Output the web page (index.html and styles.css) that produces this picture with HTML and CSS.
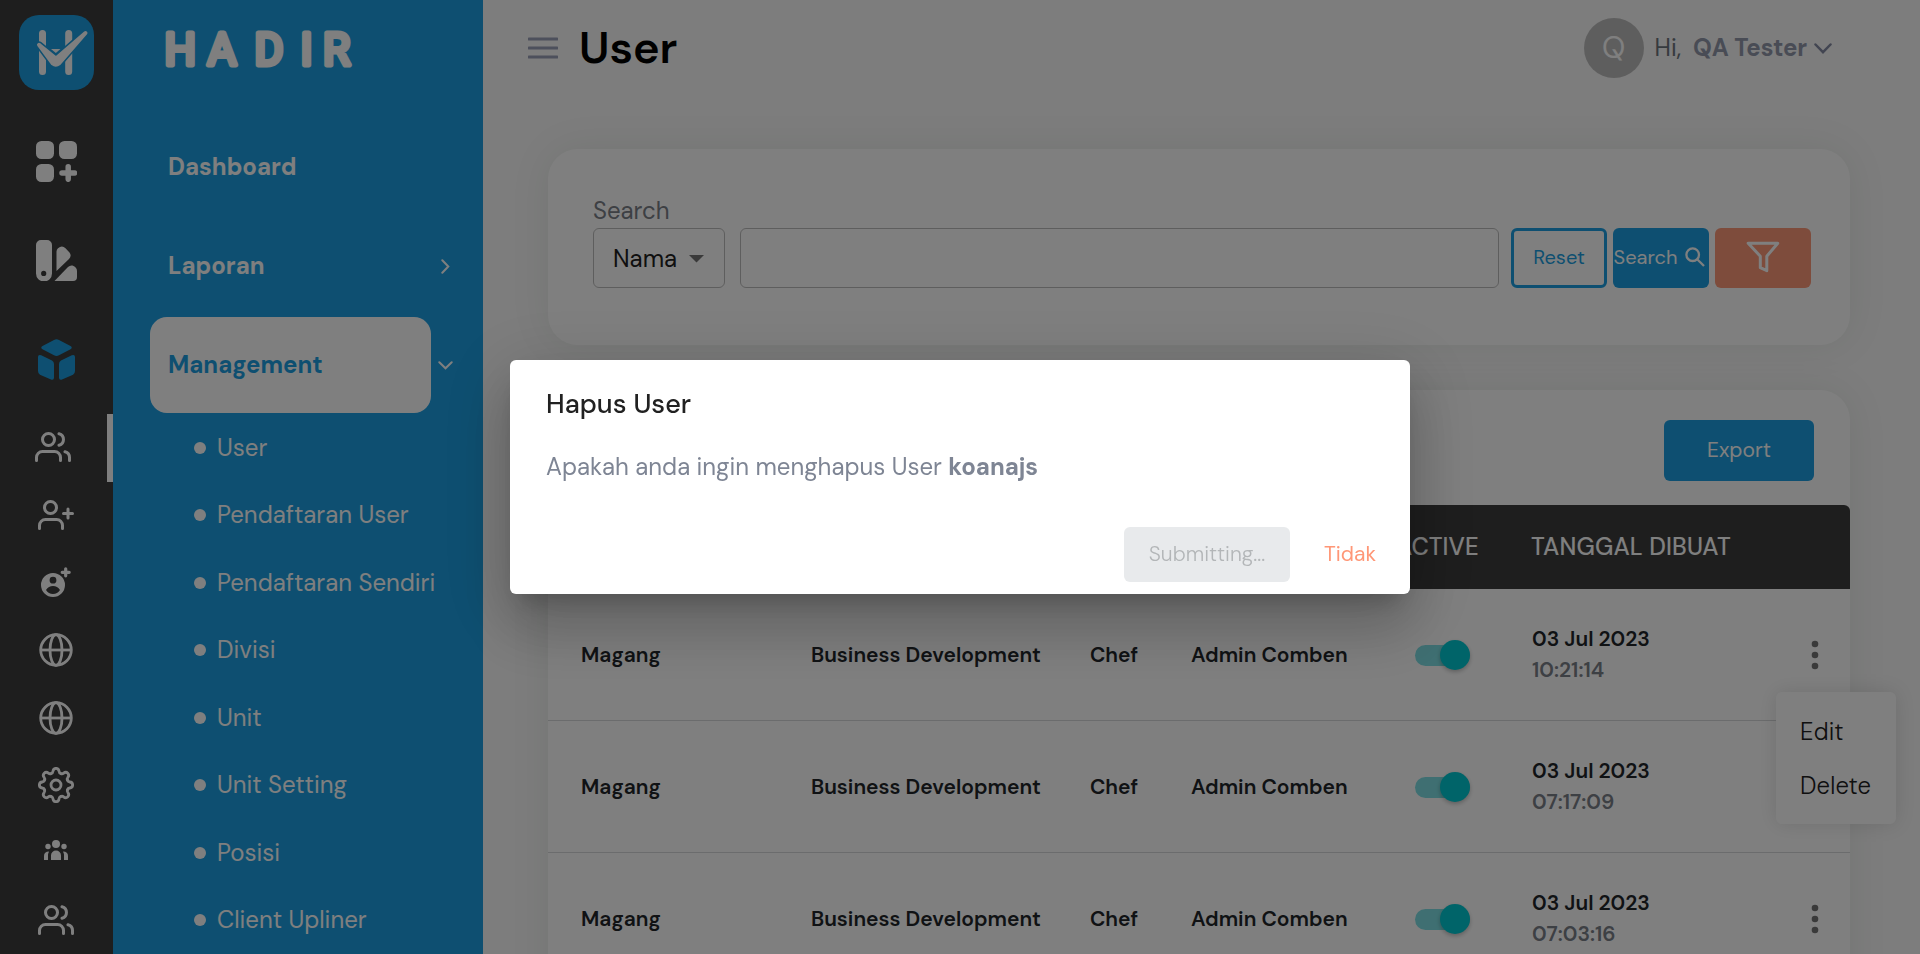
FILE: index.html
```html
<!DOCTYPE html>
<html lang="id">
<head>
<meta charset="utf-8">
<title>User</title>
<link rel="stylesheet" href="styles.css">
</head>
<body>
<svg class="defs" width="0" height="0">
  <symbol id="users" viewBox="0 0 36 30"><g fill="none" stroke="currentColor" stroke-width="3" stroke-linecap="round"><circle cx="13.5" cy="7.5" r="6"/><path d="M1.5 28.5v-3a6 6 0 0 1 6-6h12a6 6 0 0 1 6 6v3M24 1.7a6 6 0 0 1 0 11.6M30 19.7a6 6 0 0 1 4.5 5.8v3"/></g></symbol>
  <symbol id="globe" viewBox="0 0 34 34"><g fill="none" stroke="currentColor" stroke-width="2.8"><circle cx="17" cy="17" r="15.3"/><ellipse cx="17" cy="17" rx="6" ry="15.3"/><path d="M2 17h30"/></g></symbol>
  <symbol id="dots" viewBox="0 0 8 30"><g fill="currentColor"><circle cx="4" cy="4" r="3.3"/><circle cx="4" cy="15" r="3.3"/><circle cx="4" cy="26" r="3.3"/></g></symbol>
  <path id="lobe" d="M-4.8-11.5C-3.4-11.9-3.1-12.8-3-13.8C-2.6-17.6 2.6-17.6 3-13.8C3.1-12.8 3.4-11.9 4.8-11.5"/>
</svg>

<div class="app">
  <nav class="rail">
    <svg class="logo" viewBox="0 0 75 75">
      <rect width="75" height="75" rx="20" fill="#1c9fe2"/>
      <g stroke="#fff" stroke-width="7" stroke-linecap="round"><path d="M23.5 18.5v38M49.7 18.5v38"/></g>
      <path d="M32 34h9.500l-4.700 4z" fill="#fff"/>
      <path d="M20 29.800L37 43.500L66.500 18L40 48.500Q36.800 51 33.800 48.500Z" fill="#1c9fe2" stroke="#1c9fe2" stroke-width="7" stroke-linejoin="round"/>
      <path d="M20 29.800L37 43.500L66.500 18L40 48.500Q36.800 51 33.800 48.500Z" fill="#fff" stroke="#fff" stroke-width="4" stroke-linejoin="round"/>
    </svg>
    <div class="rail-main">
      <svg width="41" height="41" viewBox="0 0 41 41" fill="#fff"><rect width="18" height="18" rx="5.500"/><rect x="23" width="18" height="18" rx="5.500"/><rect y="23" width="18" height="18" rx="5.500"/><path d="M32.200 25.800v12.500M26 32h12.500" stroke="#fff" stroke-width="5.500" stroke-linecap="round"/></svg>
    </div>
    <div class="rail-main">
      <svg width="41" height="41" viewBox="0 0 41 41" fill="#fff"><path fill-rule="evenodd" d="M5 0h6a5 5 0 0 1 5 5v28.500a8 8 0 0 1-16 0V5a5 5 0 0 1 5-5zM7.700 30.800a2.600 2.600 0 1 0 0 5.200a2.600 2.600 0 0 0 0-5.200z"/><path d="M20.500 31V11.500q0-2 1.500-3.300q4-3.500 7.500 0l4 4.300q2.500 3.300-.5 6.500z"/><path d="M18.500 41L32 27q2-2 4.500-1.500q4.500 1.500 4.500 5.500v6q0 4-4 4z"/></svg>
    </div>
    <div class="rail-main">
      <svg width="37" height="41" viewBox="0 0 37 41" fill="#1c9fe2"><path d="M4.500 7L16 1q2.500-1.500 5 0l11.500 6q2.500 1.700 0 3.300L21 16.300q-2.500 1.200-5 0L4.500 10.300Q2 8.700 4.500 7z"/><path d="M3.200 16.300L14 21.500q2 1.200 2 3.500v13.500q0 3-3 2L2 35.700Q0 34.500 0 32V18q0-2.700 3.200-1.700z"/><path d="M33.800 16.300L23 21.500q-2 1.200-2 3.500v13.500q0 3 3 2l11-4.800q2-1.200 2-3.700V18q0-2.700-3.200-1.700z"/></svg>
    </div>
    <div class="rail-sub active"><svg width="36" height="30"><use href="#users"/></svg></div>
    <div class="rail-sub"><svg width="36" height="30" viewBox="0 0 36 30" fill="none" stroke="#fff" stroke-width="3" stroke-linecap="round"><circle cx="12.500" cy="7.500" r="6"/><path d="M1.500 28.500v-3a6 6 0 0 1 6-6h11a6 6 0 0 1 6 6v3M25.500 13.500h9M30 9v9"/></svg></div>
    <div class="rail-sub"><svg width="30" height="31" viewBox="0 0 30 31" fill="#fff"><path fill-rule="evenodd" d="M12 6a12 12 0 1 0 0 24a12 12 0 0 0 0-24zM12 9.800a3.400 3.400 0 1 1 0 6.800a3.400 3.400 0 0 1 0-6.800zM5 23q2.500-4 7-4t7 4q-2.500 4-7 4t-7-4z"/><path d="M24.700 1.800v7M21.200 5.300h7" stroke="#fff" stroke-width="3.200" stroke-linecap="round"/></svg></div>
    <div class="rail-sub"><svg width="34" height="34"><use href="#globe"/></svg></div>
    <div class="rail-sub"><svg width="34" height="34"><use href="#globe"/></svg></div>
    <div class="rail-sub"><svg width="36" height="36" viewBox="-18 -18 36 36" fill="none" stroke="#fff" stroke-width="2.800" stroke-linecap="round"><circle r="5"/><use href="#lobe"/><use href="#lobe" transform="rotate(45)"/><use href="#lobe" transform="rotate(90)"/><use href="#lobe" transform="rotate(135)"/><use href="#lobe" transform="rotate(180)"/><use href="#lobe" transform="rotate(225)"/><use href="#lobe" transform="rotate(270)"/><use href="#lobe" transform="rotate(315)"/></svg></div>
    <div class="rail-sub"><svg class="group" width="24" height="20" viewBox="0 0 24 20" fill="#fff"><circle cx="12" cy="4" r="4"/><circle cx="4" cy="6.500" r="2.700"/><circle cx="20" cy="6.500" r="2.700"/><path d="M7 20v-4.500a5 5 0 0 1 10 0V20zM0 20v-4q0-4.500 5-4.500q-1 2-1 4V20zM24 20v-4q0-4.500-5-4.500q1 2 1 4V20z"/></svg></div>
    <div class="rail-sub"><svg width="36" height="30"><use href="#users"/></svg></div>
  </nav>

  <aside class="sidebar">
    <svg class="brand" width="190" height="44"><text x="0.500 43.500 90.500 136.500 159" y="37">HADIR</text></svg>
    <div class="item"><span>Dashboard</span></div>
    <div class="item"><span>Laporan</span><svg width="9" height="15" viewBox="0 0 9 15"><path d="M1.300 1.300l6 6.200l-6 6.200"/></svg></div>
    <div class="item selected"><span>Management</span><svg width="15" height="9" viewBox="0 0 15 9"><path d="M1.300 1.300l6.200 6l6.200-6"/></svg></div>
    <ul class="subs">
      <li>User</li><li>Pendaftaran User</li><li>Pendaftaran Sendiri</li><li>Divisi</li><li>Unit</li><li>Unit Setting</li><li>Posisi</li><li>Client Upliner</li>
    </ul>
  </aside>

  <main class="main">
    <header class="top">
      <svg class="burger" width="30" height="22" viewBox="0 0 30 22"><path d="M1 2h28M1 11h28M1 20h28"/></svg>
      <h1>User</h1>
      <div class="avatar">Q</div>
      <span class="hi">Hi,</span>
      <span class="name">QA Tester</span>
      <svg class="chev" width="18" height="11" viewBox="0 0 18 11"><path d="M1.500 1.500L9 9.200l7.500-7.700"/></svg>
    </header>

    <section class="card search-card">
      <label>Search</label>
      <div class="fields">
        <div class="select"><span>Nama</span><svg width="15" height="8"><path d="M0 0h15l-7.500 7.500z" fill="#757575"/></svg></div>
        <div class="input"></div>
        <button class="btn outline">Reset</button>
        <button class="btn find">Search<svg width="20" height="20" viewBox="0 0 20 20"><circle cx="7.700" cy="7.700" r="6.300"/><path d="M12.200 12.200l6.800 6.800"/></svg></button>
        <button class="btn filter"><svg width="34" height="32" viewBox="0 0 34 32"><path d="M2.200 2.200h29.600l-11 13v14.500l-6.500-3V15.200z"/></svg></button>
      </div>
    </section>

    <section class="card table-card">
      <div class="tools"><button class="btn export">Export</button></div>
      <div class="thead"><span class="c-act">ACTIVE</span><span>TANGGAL DIBUAT</span></div>
      <div class="row"><span>Magang</span><span>Business Development</span><span>Chef</span><span>Admin Comben</span><i class="toggle"></i><div class="date"><b>03 Jul 2023</b><small>10:21:14</small></div><svg width="8" height="30"><use href="#dots"/></svg></div>
      <div class="row"><span>Magang</span><span>Business Development</span><span>Chef</span><span>Admin Comben</span><i class="toggle"></i><div class="date"><b>03 Jul 2023</b><small>07:17:09</small></div><svg width="8" height="30"><use href="#dots"/></svg></div>
      <div class="row"><span>Magang</span><span>Business Development</span><span>Chef</span><span>Admin Comben</span><i class="toggle"></i><div class="date"><b>03 Jul 2023</b><small>07:03:16</small></div><svg width="8" height="30"><use href="#dots"/></svg></div>
    </section>
  </main>
</div>

<div class="menu"><span>Edit</span><span>Delete</span></div>

<div class="backdrop">
  <div class="dialog">
    <h2>Hapus User</h2>
    <p>Apakah anda ingin menghapus User <b>koanajs</b></p>
    <div class="actions"><button class="submit">Submitting...</button><button class="cancel">Tidak</button></div>
  </div>
</div>
</body>
</html>
```
FILE: styles.css
```css
* { box-sizing: border-box; }
body { margin: 0; height: 954px; overflow: hidden; background: #fafafa; font: 400 24px/36px "DM Sans", "Open Sans", sans-serif; font-optical-sizing: none; color: #212121; }
button { font: inherit; font-optical-sizing: none; border: 0; padding: 0; background: none; }
.defs { position: absolute; }
.app { display: flex; height: 954px; overflow: hidden; }

.rail { width: 113px; flex: none; background: #3c3c3c; color: #fff; display: flex; flex-direction: column; align-items: center; padding-top: 15px; }
.logo { width: 75px; height: 75px; flex: none; margin-bottom: 22px; }
.rail-main { height: 99px; flex: none; display: flex; align-items: center; }
.rail-main:nth-of-type(3) { margin-bottom: 5px; }
.rail-sub { width: 100%; height: 67.500px; flex: none; display: flex; align-items: center; justify-content: center; padding-right: 1px; }
.rail-sub.active { border-right: 6px solid #fff; padding: 0 1px 1px 0; }
.group { margin-top: -5px; }

.sidebar { width: 370px; flex: none; background: #1c9fe2; color: #fff; padding: 28px 28px 0 37px; }
.brand { display: block; margin: 0 0 47px 14px; overflow: visible; }
.brand text { font: 400 44px Roboto, sans-serif; fill: #fff; stroke: #fff; stroke-width: 5px; stroke-linejoin: round; }
.item { height: 96px; margin-bottom: 3px; display: flex; align-items: center; font-weight: 700; }
.item span { width: 281px; height: 96px; line-height: 96px; padding-left: 18px; border-radius: 17px; }
.item svg { fill: none; stroke: #fff; stroke-width: 2; stroke-linecap: round; margin-left: 10px; }
.item.selected { margin-bottom: 1px; }
.item.selected span { background: #fff; color: #1c9fe2; }
.item.selected svg { margin-left: 7px; }
.subs { list-style: none; margin: 0; padding: 0 0 0 44px; }
.subs li { height: 67.500px; display: flex; align-items: center; gap: 11px; white-space: nowrap; }
.subs li::before { content: ""; width: 12px; height: 12px; border-radius: 50%; background: #fff; }

.main { flex: 1; min-width: 0; padding: 0 70px 0 65px; }
.top { height: 96px; margin: 0 18px 53px -20px; display: flex; align-items: center; }
.burger { stroke: #9aa0b8; stroke-width: 3; stroke-linecap: round; margin-left: 0; }
h1 { margin: 0 auto 0 21px; font-size: 45px; line-height: 60px; font-weight: 600; color: #000; }
.avatar { width: 60px; height: 60px; border-radius: 50%; background: #bdbdbd; color: #fff; font-size: 30px; display: grid; place-items: center; }
.hi { color: #6c757d; margin: 0 12px 0 11px; }
.name { color: #9298ab; font-weight: 700; letter-spacing: -.1px; }
.chev { fill: none; stroke: #848ba3; stroke-width: 2.500; stroke-linecap: round; margin-left: 7px; }

.card { background: #fff; border-radius: 30px; box-shadow: 0 0 42px rgba(10, 50, 30, .08); }
.search-card { height: 196px; padding: 44px 39px 0 45px; margin-bottom: 45px; }
.search-card label { display: block; height: 35px; color: #7a8088; }
.fields { display: flex; height: 60px; }
.select, .input { border: 1px solid #bdbdbd; border-radius: 6px; }
.select { width: 132px; display: flex; align-items: center; justify-content: space-between; padding: 1px 20px 0 19px; margin-right: 15px; }
.input { flex: 1; margin-right: 12px; }
.btn { width: 96px; height: 60px; border-radius: 6px; background: #1c9fe2; color: #fff; font-size: 20px; display: flex; align-items: center; justify-content: center; padding-bottom: 2px; }
.btn.outline { background: none; border: 3px solid #1c9fe2; color: #1c9fe2; }
.btn.find { margin: 0 6px; gap: 8px; padding-right: 3px; }
.find svg, .filter svg { fill: none; stroke: #fff; stroke-width: 2.300; }
.filter svg { stroke-width: 3; stroke-linejoin: round; }
.btn.filter { background: #fc9878; }

.tools { height: 115px; padding: 30px 36px 0 0; display: flex; justify-content: flex-end; }
.btn.export { width: 150px; height: 61px; font-size: 21px; }
.table-card { height: 700px; }
.thead { height: 84px; background: #3c3c3c; color: #fff; border-radius: 6px 6px 0 0; font-weight: 500; display: grid; grid-template-columns: 848px 135px 1fr; align-items: center; letter-spacing: .15px; }
.thead .c-act { grid-column: 2; }
.row { height: 132px; border-bottom: 1px solid #d6d8da; padding: 0 31px 0 33px; display: grid; grid-template-columns: 230px 279px 101px 224px 117px 1fr 8px; align-items: center; font-size: 21px; font-weight: 600; color: #212529; white-space: nowrap; }
.row > svg { color: #757575; }
.toggle { width: 55px; height: 21px; border-radius: 11px; background: #7edfe4; position: relative; top: 1px; }
.toggle::after { content: ""; position: absolute; right: 0; top: -5px; width: 30px; height: 30px; border-radius: 50%; background: #00c8d2; box-shadow: 0 2px 4px rgba(0, 0, 0, .25); }
.date { line-height: 31px; display: grid; }
.date b { font-weight: 600; }
.date small { font-size: 21px; color: #7a8088; }

.menu { position: absolute; left: 1776px; top: 692px; width: 120px; height: 132px; border-radius: 6px; background: #fff; box-shadow: 0 0 20px rgba(0, 0, 0, .12); padding: 13px 24px 11px; display: grid; grid-template-rows: 54px 54px; align-items: center; font-weight: 300; letter-spacing: .15px; }

.backdrop { position: fixed; inset: 0; background: rgba(0, 0, 0, .5); display: flex; align-items: center; justify-content: center; }
.dialog { width: 900px; height: 234px; border-radius: 6px; background: #fff; padding: 25px 12px 12px 36px; box-shadow: 0 16px 22px -10px rgba(0, 0, 0, .2), 0 36px 57px 5px rgba(0, 0, 0, .14), 0 14px 69px 12px rgba(0, 0, 0, .12); }
h2 { margin: 0 0 26px; font-size: 27px; line-height: 38px; font-weight: 500; }
p { margin: 0 0 42px; color: #7e8594; }
.actions { display: flex; justify-content: flex-end; }
.submit, .cancel { height: 55px; padding-bottom: 2px; font-size: 21px; }
.submit { width: 166px; border-radius: 6px; background: #e8eaec; color: #b3b6b8; font-weight: 300; }
.cancel { width: 96px; margin-left: 12px; color: #ff9777; }
```
